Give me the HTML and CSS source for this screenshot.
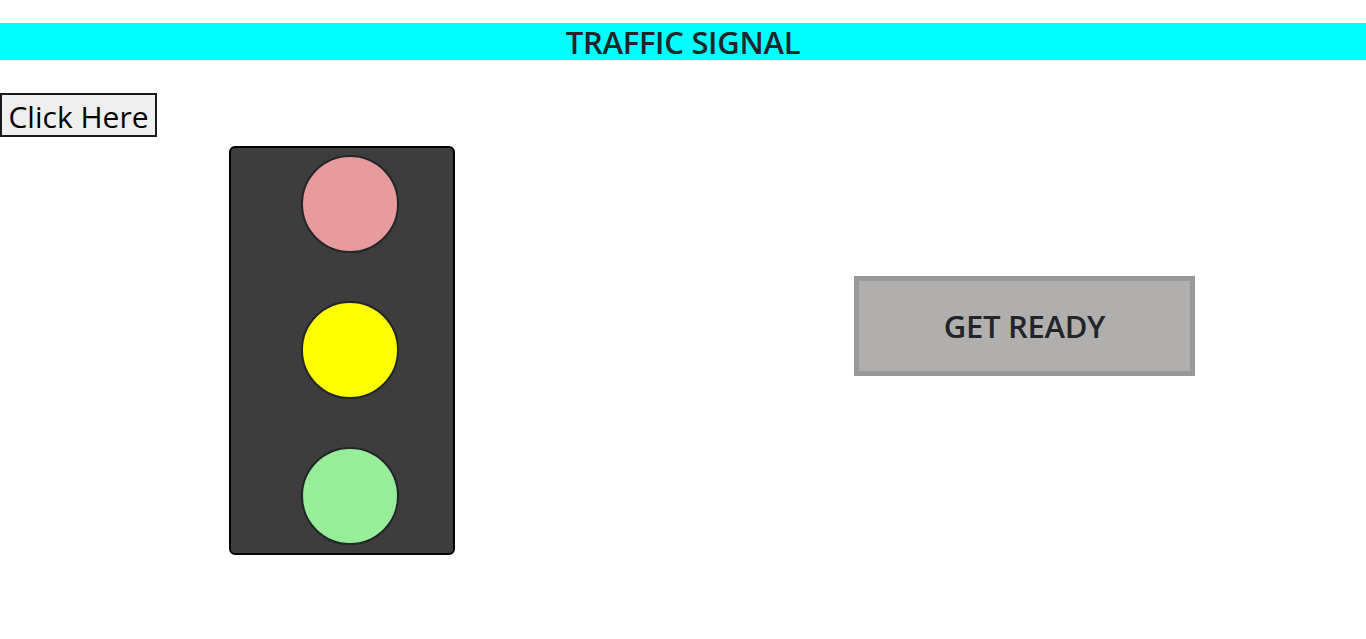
FILE: index.html
```html
<!DOCTYPE html>
<html>
<head>
<meta charset="utf-8">
<title>Traffic Signal</title>
<link rel="stylesheet" href="styles.css">
</head>
<body>
<h1 class="title">TRAFFIC SIGNAL</h1>
<button class="click-btn">Click Here</button>
<main class="stage">
  <div class="signal">
    <div class="lamp lamp-red"></div>
    <div class="lamp lamp-yellow"></div>
    <div class="lamp lamp-green"></div>
  </div>
  <div class="status">GET READY</div>
</main>
</body>
</html>
```

FILE: styles.css
```css
html, body {
  margin: 0;
  padding: 0;
  background: #ffffff;
  font-family: "Open Sans", "Noto Sans", sans-serif;
  color: #212529;
}

.title {
  margin: 23px 0 0;
  height: 37px;
  line-height: 39px;
  background: #00ffff;
  text-align: center;
  font-size: 31px;
  font-weight: 600;
  letter-spacing: -0.3px;
}

.click-btn {
  display: block;
  margin-top: 33px;
  width: 157px;
  height: 44px;
  padding: 0 4px;
  border: 2px solid #1a1a1a;
  background: #efefef;
  color: #000;
  font-family: "Open Sans", "Noto Sans", sans-serif;
  font-size: 30px;
  line-height: 44px;
  white-space: nowrap;
}

.stage {
  display: flex;
  align-items: flex-start;
  padding-left: 229px;
  margin-top: 9px;
}

.signal {
  box-sizing: border-box;
  width: 226px;
  height: 409px;
  background: #3d3d3d;
  border: 2px solid #000;
  border-radius: 6px;
  display: flex;
  flex-direction: column;
  gap: 48px;
  padding: 7px 0 0 70px;
}

.lamp {
  box-sizing: border-box;
  width: 98px;
  height: 98px;
  border-radius: 50%;
  border: 2px solid #22252a;
}

.lamp-red { background: #e89b9b; }
.lamp-yellow { background: #ffff00; }
.lamp-green { background: #98ee98; }

.status {
  box-sizing: border-box;
  margin-left: 399px;
  margin-top: 130px;
  width: 341px;
  height: 100px;
  border: 5px solid #999999;
  background: #b0afad;
  display: flex;
  align-items: center;
  justify-content: center;
  font-size: 31px;
  font-weight: 600;
  letter-spacing: -0.3px;
  color: #212529;
}
```
